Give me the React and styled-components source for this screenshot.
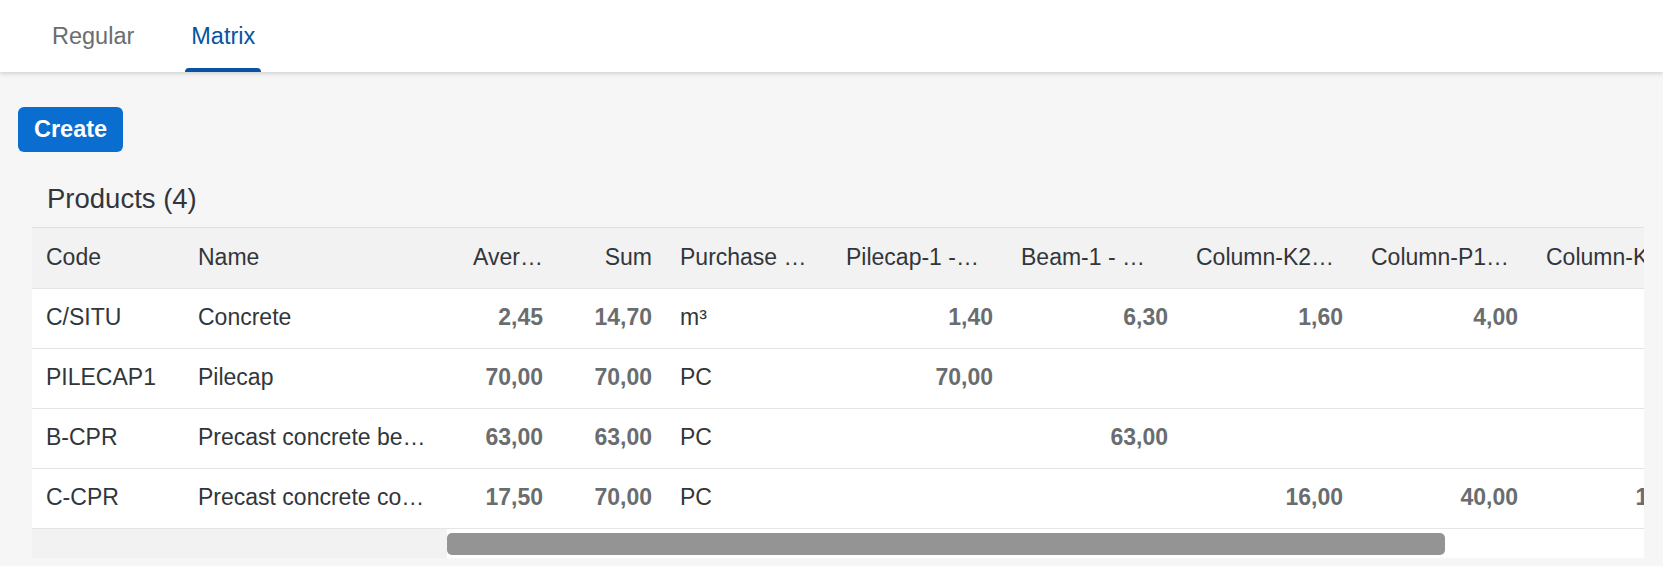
import React from 'react'
import styled, { createGlobalStyle } from 'styled-components'

const GlobalStyle = createGlobalStyle`
  html, body {
    margin: 0;
    padding: 0;
    background: #f6f6f6;
    font-family: 'Liberation Sans', Arial, sans-serif;
    color: #32363a;
  }
`

const COLUMNS = '152px 263px 110px 109px 166px 175px 175px 175px 175px 175px'

const Page = styled.div`
  width: 1663px;
  height: 566px;
  overflow: hidden;
  background: #f6f6f6;
`

const TabBar = styled.div`
  position: relative;
  z-index: 1;
  height: 72px;
  display: flex;
  gap: 45px;
  padding-left: 46px;
  background: #fff;
  box-shadow: 0 2px 4px rgba(0, 0, 0, 0.14);
`

const Tab = styled.div`
  display: flex;
  align-items: center;
  padding: 0 6px;
  font-size: 23.5px;
  color: ${(p) => (p.$active ? '#0854a0' : '#6a6d70')};
  position: relative;

  &::after {
    content: '';
    display: ${(p) => (p.$active ? 'block' : 'none')};
    position: absolute;
    left: 0;
    right: 0;
    bottom: 0;
    height: 4px;
    border-radius: 4px 4px 0 0;
    background: #0854a0;
  }
`

const Content = styled.div`
  padding: 35px 19px 0 18px;
`

const CreateButton = styled.button`
  height: 45px;
  padding: 0 16px;
  border: none;
  border-radius: 6px;
  background: #0a6ed1;
  color: #fff;
  font-family: 'Liberation Sans', Arial, sans-serif;
  font-size: 23.5px;
  font-weight: 700;
`

const Title = styled.div`
  margin: 31px 0 12px 29px;
  height: 32px;
  line-height: 32px;
  font-size: 27.5px;
  color: #32363a;
`

const Panel = styled.div`
  margin-left: 14px;
  overflow: hidden;
  background: #fff;
`

const Row = styled.div`
  display: grid;
  grid-template-columns: ${COLUMNS};
  width: max-content;
  min-width: 100%;
  height: ${(p) => (p.$header ? '60px' : '59px')};
  background: ${(p) => (p.$header ? '#f2f2f2' : '#fff')};
  border-top: ${(p) => (p.$header ? '1px solid #e0e0e0' : 'none')};
  border-bottom: 1px solid #e5e5e5;
`

const Cell = styled.div`
  display: flex;
  align-items: center;
  justify-content: ${(p) => (p.$right ? 'flex-end' : 'flex-start')};
  padding: 0 14px 2px;
  white-space: nowrap;
  overflow: hidden;
  font-size: 23px;
  font-weight: ${(p) => (p.$bold ? 700 : 400)};
  color: ${(p) => (p.$bold ? '#6a6d70' : '#32363a')};
`

const ScrollRow = styled.div`
  display: flex;
  height: 29px;
`

const FixedTrack = styled.div`
  width: 415px;
  background: #f2f2f2;
`

const Track = styled.div`
  flex: 1;
  padding: 4px 0 3px;
  background: #fff;
`

const Thumb = styled.div`
  height: 100%;
  width: ${(p) => p.$ratio * 100}%;
  border-radius: 5px;
  background: #949494;
`

const headers = [
  { label: 'Code' },
  { label: 'Name' },
  { label: 'Aver…', right: true },
  { label: 'Sum', right: true },
  { label: 'Purchase …' },
  { label: 'Pilecap-1 -…' },
  { label: 'Beam-1 - …' },
  { label: 'Column-K2…' },
  { label: 'Column-P1…' },
  { label: 'Column-K1…' },
]

const rows = [
  ['C/SITU', 'Concrete', '2,45', '14,70', 'm³', '1,40', '6,30', '1,60', '4,00', ''],
  ['PILECAP1', 'Pilecap', '70,00', '70,00', 'PC', '70,00', '', '', '', ''],
  ['B-CPR', 'Precast concrete be…', '63,00', '63,00', 'PC', '', '63,00', '', '', ''],
  ['C-CPR', 'Precast concrete co…', '17,50', '70,00', 'PC', '', '', '16,00', '40,00', '10,00'],
]

const isNumCol = (i) => i === 2 || i === 3 || i >= 5

const App = () => {
  return (
    <>
      <GlobalStyle />
      <Page>
        <TabBar>
          <Tab>Regular</Tab>
          <Tab $active>Matrix</Tab>
        </TabBar>
        <Content>
          <CreateButton>Create</CreateButton>
          <Title>Products (4)</Title>
          <Panel>
            <Row $header>
              {headers.map((h) => (
                <Cell key={h.label} $right={h.right}>
                  {h.label}
                </Cell>
              ))}
            </Row>
            {rows.map((r) => (
              <Row key={r[0]}>
                {r.map((v, i) => (
                  <Cell key={i} $right={isNumCol(i)} $bold={isNumCol(i)}>
                    {v}
                  </Cell>
                ))}
              </Row>
            ))}
            <ScrollRow>
              <FixedTrack />
              <Track>
                <Thumb $ratio={0.834} />
              </Track>
            </ScrollRow>
          </Panel>
        </Content>
      </Page>
    </>
  )
}

export default App
